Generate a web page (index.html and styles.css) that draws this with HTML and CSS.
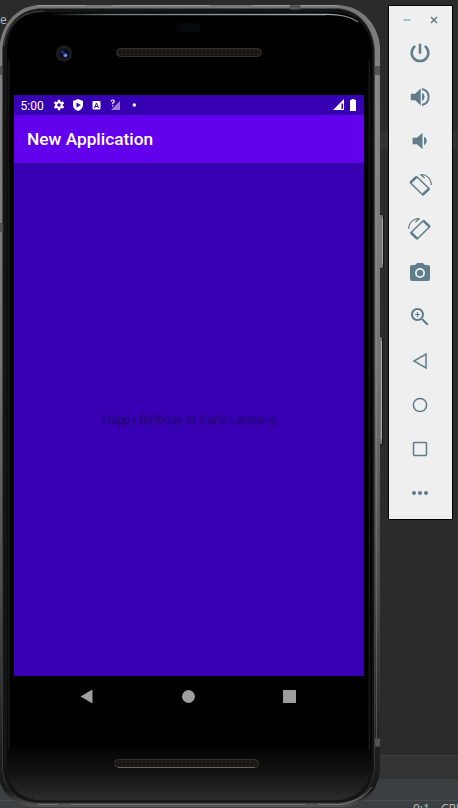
FILE: index.html
```html
<!DOCTYPE html>
<html lang="en">
<head>
<meta charset="utf-8">
<title>New Application</title>
<link rel="stylesheet" href="styles.css">
</head>
<body>
<div class="desktop">
  <div class="ide" aria-hidden="true">
    <span class="ide-tab">e</span>
    <div class="ide-band"></div>
    <div class="ide-panel"></div>
    <div class="ide-tools"></div>
    <div class="ide-status"><span>9:1</span><span>CRLF</span></div>
  </div>

  <main class="phone">
    <svg class="frame" width="386" height="808" viewBox="0 0 386 808">
      <defs>
        <linearGradient id="metal" x1="0" y1="0" x2="0" y2="1">
          <stop offset="0" stop-color="#777"/><stop offset=".1" stop-color="#858585"/>
          <stop offset=".45" stop-color="#747474"/><stop offset=".75" stop-color="#484848"/><stop offset=".93" stop-color="#202020"/><stop offset=".98" stop-color="#181818"/><stop offset="1" stop-color="#555"/>
        </linearGradient>
        <linearGradient id="glass" x1="0" y1="0" x2="0" y2="1">
          <stop offset="0" stop-color="#000"/><stop offset=".925" stop-color="#000"/>
          <stop offset=".96" stop-color="#101010"/><stop offset="1" stop-color="#2c2c2c"/>
        </linearGradient>
        <linearGradient id="shine" x1="0" x2="1">
          <stop offset="0" stop-color="#899" stop-opacity="0"/><stop offset=".2" stop-color="#6f7979"/>
          <stop offset=".9" stop-color="#a4b0b0"/><stop offset="1" stop-color="#777"/>
        </linearGradient>
        <pattern id="mesh" width="4" height="4" patternUnits="userSpaceOnUse">
          <rect width="4" height="4" fill="#181613"/><rect x="1" y="1" width="2" height="2" fill="#24211e"/>
        </pattern>
      </defs>
      <g fill="#777" stroke="#161616">
        <rect x="378.500" y="214.500" width="5" height="54" rx="1.500"/>
        <rect x="377.500" y="336.500" width="5" height="108" rx="1.500"/>
      </g>
      <path d="M382.500 219v45M381.500 341v98" stroke="#aaa"/>
      <path d="M38 5H338C362 6 378 24 380 47V770C378 792 364 806 340 807H36C14 806 2 793-1 778V50C1 24 16 7 38 5Z" fill="url(#metal)"/>
      <path d="M40 8.500H338C359 10 373 27 374.500 50V768C373 789 360 802 338 803H38C16 802 4 790 2.500 769V50C4 26 18 10 40 8.500Z" fill="#141414" stroke="#444" stroke-width=".7"/>
      <path d="M41 12.500H335C356 13 370 27 372 50V766C370 786 356 799 335 800.500H41C20 799 8 787 7 766V50C8 27 20 13 41 12.500Z" fill="url(#glass)"/>
      <path d="M369.500 60V750M8.500 60V750" stroke="#161616" stroke-width="2"/>
      <path d="M376.500 60V740" stroke="#9a9a9a" stroke-opacity=".35"/>
      <path d="M4 46C6 26 20 11 44 11" fill="none" stroke="#555" stroke-width=".8"/>
      <path d="M50 14.500H325Q347 14 358 22" fill="none" stroke="url(#shine)" stroke-width="1.300"/>
      <path d="M38 804.500H340Q361 802 372 787" fill="none" stroke="#777" stroke-width="1"/>
      <path d="M37 5.500h49M113 5.500h97M253 5.500h84" stroke="#999"/>
      <path d="M290 5.500h10v4h-10zM375 66.500h5v8h-5zM375 738.500h5v8h-5zM59 803.500h11v4h-11zM306 803.500h11v4h-11zM-1 66.500h3v8h-3zM-1 223.500h4v8h-4z" fill="#555" stroke="#3c3c3c" stroke-width=".5"/>
      <rect x="176" y="23" width="25" height="9" rx="4.500" fill="#07080b"/>
      <circle cx="64" cy="53.500" r="8.300" fill="#1b1b1e"/><circle cx="64" cy="53.500" r="5" fill="#080c20"/>
      <circle cx="62.500" cy="52" r="2" fill="#1c2860"/><circle cx="65.300" cy="55.300" r="2" fill="#5068c4"/><circle cx="65.600" cy="55.600" r=".9" fill="#a8b8f8"/>
      <g fill="url(#mesh)" stroke="#35322d">
        <rect x="116.500" y="48.500" width="145" height="8" rx="4"/>
        <rect x="114.500" y="759.500" width="144" height="8" rx="4"/>
      </g>
      <path d="M118 767.500H255" stroke="#66645f"/>
    </svg>

    <section class="screen">
      <div class="status-bar">
        <span class="clock">5:00</span>
        <svg class="status-left" width="84" height="14" viewBox="0 0 84 14" fill="#fff">
          <g transform="translate(6 7)">
            <circle r="2.800" fill="none" stroke="#fff" stroke-width="2.100"/>
            <path d="M-1.200-5.300h2.400v2.300h-2.400zM-1.200 3h2.400v2.300h-2.400z"/>
            <path d="M-1.200-5.300h2.400v2.300h-2.400zM-1.200 3h2.400v2.300h-2.400z" transform="rotate(60)"/>
            <path d="M-1.200-5.300h2.400v2.300h-2.400zM-1.200 3h2.400v2.300h-2.400z" transform="rotate(120)"/>
          </g>
          <path d="M25 1l5 2v4c0 3-2 5-5 6-3-1-5-3-5-6V3z"/><path d="M23.500 4.500v5L27.800 7z" fill="#3700b3"/>
          <rect x="39.500" y="3" width="8" height="8.500" rx="1"/>
          <path d="M41.500 10l2-5 2 5M42.300 8.500h2.400" fill="none" stroke="#3700b3"/>
          <path d="M67 3v9H58z" opacity=".5"/>
          <path d="M58.200 3.500q0-1.500 1.500-1.500t1.500 1.300q0 .8-1.500 1.900v1M59.700 7.300v1.200" fill="none" stroke="#fff" stroke-width="1.200"/>
          <circle cx="81.300" cy="7" r="1.700"/>
        </svg>
        <svg class="status-right" width="24" height="12" viewBox="0 0 24 12" fill="#fff">
          <path d="M11 0v11H0z"/><path d="M8.500 4.500h1.500v5.500H8.500z" fill="#3700b3"/>
          <path d="M17 1h1.500V0h3v1H23v11h-6V1z"/>
        </svg>
      </div>
      <header class="app-bar"><h1>New Application</h1></header>
      <div class="content"><p>Happy Birthday to Carlo Lansang</p></div>
    </section>
    <nav class="nav-bar">
      <svg width="13" height="15" viewBox="0 0 13 15"><path d="M12.500.5v14L.5 7.500z"/></svg>
      <svg width="13" height="13" viewBox="0 0 13 13"><circle cx="6.500" cy="6.500" r="6.400"/></svg>
      <svg width="13" height="13" viewBox="0 0 13 13"><rect width="13" height="13" rx=".6"/></svg>
    </nav>
  </main>

  <aside class="toolbar">
    <div class="window-buttons">
      <svg width="8" height="10" viewBox="0 0 8 10"><path d="M.5 5h7" stroke="#a3b5bd" stroke-width="1.600"/></svg>
      <svg width="8" height="10" viewBox="0 0 8 10"><path d="M1 2l6 6M7 2L1 8" stroke="#607d8b" stroke-width="1.500"/></svg>
    </div>
    <svg class="tool" viewBox="0 0 24 24"><path class="line thick" d="M12 2.700v10M7.200 5a8.300 8.300 0 1 0 9.600 0"/></svg>
    <svg class="tool" viewBox="0 0 24 24"><path d="M2.800 8.700v6.600h4.400l5.500 5.300V3.400L7.200 8.700zM14 7.800v8.400c3.400-1.700 3.400-6.700 0-8.400z"/><path class="line medium" d="M14 4c8.800 2 8.800 14 0 16"/></svg>
    <svg class="tool" viewBox="0 0 24 24"><path d="M4.600 8.700v6.600H9l5.500 5V3.700L9 8.700zM16 7.800v8.400c3.700-1.700 3.700-6.700 0-8.400z"/></svg>
    <svg class="tool" viewBox="0 0 24 24"><path class="line" d="M8.800 3.800L2.400 9.700 14.800 22l6.400-6.300z"/><path class="line thick" d="M2.500 9.500L8.500 3.800M14.800 21.700l6-5.700"/><path class="line thin" d="M12.500 1.700C18 .8 23.300 5.500 23.300 12M12.500 1.500l4 3.500"/></svg>
    <svg class="tool mirrored" viewBox="0 0 24 24"><path class="line" d="M8.800 3.800L2.400 9.700 14.800 22l6.400-6.300z"/><path class="line thick" d="M2.500 9.500L8.500 3.800M14.800 21.700l6-5.700"/><path class="line thin" d="M12.500 1.700C18 .8 23.300 5.500 23.300 12M12.500 1.500l4 3.500"/></svg>
    <svg class="tool" viewBox="0 0 24 24"><path fill-rule="evenodd" d="M9 2L7.200 4H4a2 2 0 0 0-2 2v12a2 2 0 0 0 2 2h16a2 2 0 0 0 2-2V6a2 2 0 0 0-2-2h-3.200L15 2zM12 7a5 5 0 1 1 0 10 5 5 0 0 1 0-10z"/><circle cx="12" cy="12" r="3.200"/></svg>
    <svg class="tool" viewBox="0 0 24 24"><path fill-rule="evenodd" d="M15.500 14h-.8l-.3-.3A6.500 6.500 0 1 0 13.700 14.400l.3.300v.8l5 5 1.500-1.500zM9.500 14a4.500 4.500 0 1 1 0-9 4.500 4.500 0 0 1 0 9z"/><path class="line thin" d="M9.500 7v5M7 9.500h5"/></svg>
    <svg class="tool" viewBox="0 0 24 24"><path class="line" d="M18 5v14L6 12z"/></svg>
    <svg class="tool" viewBox="0 0 24 24"><circle class="line" cx="12" cy="12" r="6.600"/></svg>
    <svg class="tool" viewBox="0 0 24 24"><rect class="line" x="5.500" y="5.500" width="13" height="13" rx="1"/></svg>
    <svg class="tool" viewBox="0 0 24 24"><circle cx="6" cy="12" r="2"/><circle cx="12" cy="12" r="2"/><circle cx="18" cy="12" r="2"/></svg>
  </aside>
</div>
</body>
</html>
```
FILE: styles.css
```css
* { box-sizing: border-box; }
body { margin: 0; background: #2b2b2b; font-family: Roboto, sans-serif; }
svg { display: block; flex: none; }
.desktop { position: relative; width: 458px; height: 808px; overflow: hidden; display: flex; align-items: flex-start; }

.ide { position: absolute; inset: 0; display: flex; flex-direction: column; }
.ide-tab { height: 130px; padding-top: 13px; color: #a9b7c6; font: 12px/14px "Open Sans", sans-serif; }
.ide-band { height: 20px; background: #323232; }
.ide-panel { flex: 1; }
.ide-tools { height: 24px; background: #313335; border-top: 1px solid #3d3d3d; }
.ide-status { height: 29px; padding: 22px 0 0 413px; display: flex; gap: 11px; background: linear-gradient(#3c3f41 21px, #4a4d4f 21px, #4a4d4f 22px, #3c3f41 22px); color: #bbb; font: 12px/16px "Open Sans", sans-serif; }

.phone { position: relative; flex: none; width: 388px; height: 808px; padding: 95px 24px 0 14px; }
.frame { position: absolute; top: 0; left: 0; }
.screen { position: relative; width: 350px; height: 581px; display: flex; flex-direction: column; background: #3700b3; }
.status-bar { height: 20px; display: flex; align-items: center; padding: 0 7px 0 6.500px; color: #fff; }
.clock { width: 32.500px; font-size: 12px; line-height: 20px; padding-top: 1px; }
.status-right { margin-left: auto; }
.app-bar { height: 48px; display: flex; align-items: center; padding: 0 13px; background: #6200ee; box-shadow: 0 1px 1px #3000a0; color: #fff; }
.app-bar h1 { margin: 0; font-size: 17.300px; font-weight: 500; line-height: 24px; }
.content { flex: 1; display: flex; align-items: center; justify-content: center; }
.content p { margin: 0; color: #220074; font-size: 11.900px; line-height: 16px; }
.nav-bar { position: relative; height: 40px; display: flex; align-items: center; justify-content: space-between; padding: 0 68px 0 66px; fill: #9e9e9e; }

.toolbar { position: relative; margin-top: 5px; width: 65px; height: 515px; flex: none; display: flex; flex-direction: column; background: #efefef; border: 1px solid #000; }
.window-buttons { width: 100%; height: 25px; display: flex; justify-content: space-between; padding: 9px 14px 0; }
.tool { width: 24px; height: 24px; margin: 10px 0 10px 19px; fill: #607d8b; }
.line { fill: none; stroke: #607d8b; stroke-width: 1.500; }
.thin { stroke-width: 1.200; }
.medium { stroke-width: 2; }
.thick { stroke-width: 2.500; }
.mirrored { transform: scaleX(-1); }
```
